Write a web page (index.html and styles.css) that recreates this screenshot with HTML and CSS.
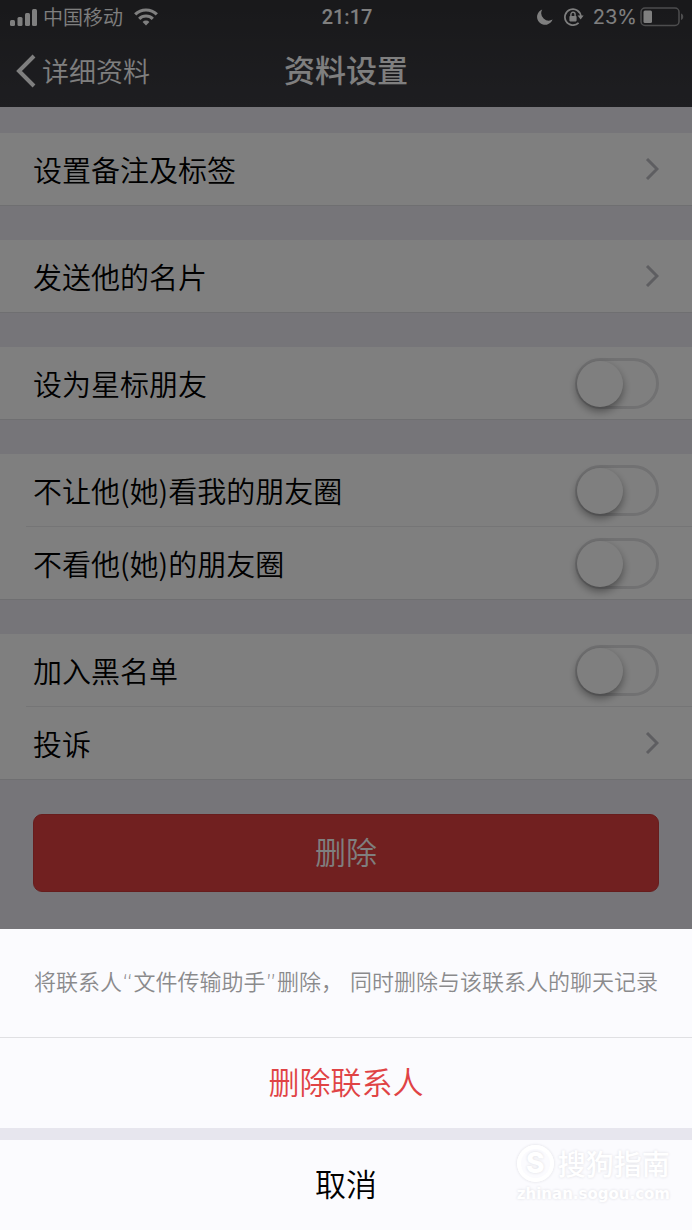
FILE: index.html
```html
<!DOCTYPE html>
<html lang="zh-CN">
<head>
  <meta charset="UTF-8">
  <meta name="viewport" content="width=device-width, initial-scale=1">
  <title>资料设置</title>
  <link rel="stylesheet" href="styles.css">
</head>
<body>
  <header class="header">
    <div class="status-bar">
      <div class="status-left">
        <svg class="signal" width="27" height="17" viewBox="0 0 27 17" fill="currentColor">
          <rect x="0" y="11" width="5" height="6" rx="1.5"/>
          <rect x="7.5" y="8" width="5" height="9" rx="1.5"/>
          <rect x="15" y="4" width="5" height="13" rx="1.5"/>
          <rect x="22" y="0" width="5" height="17" rx="1.5"/>
        </svg>
        <span class="carrier">中国移动</span>
        <svg class="wifi" width="24" height="18" viewBox="0 0 24 18" fill="none" stroke="currentColor" stroke-width="3.2">
          <path d="M1.2 6.4a15.4 15.4 0 0 1 21.6 0"/>
          <path d="M5.2 10.8a9.7 9.7 0 0 1 13.6 0"/>
          <path d="M12 17.5l-3.4-3.6a4.8 4.8 0 0 1 6.8 0z" fill="currentColor" stroke="none"/>
        </svg>
      </div>
      <span class="time">21:17</span>
      <div class="status-right">
        <svg class="moon" width="16" height="16" viewBox="0 0 16 16" fill="currentColor">
          <path d="M5.2 0.4A8 8 0 1 0 15.6 10.6A7.6 7.6 0 0 1 5.2 0.4z"/>
        </svg>
        <svg class="lock" width="20" height="18" viewBox="0 0 20 18" fill="none" stroke="currentColor">
          <path d="M14.6 14.8A8 8 0 1 1 16.9 8.5" stroke-width="1.7"/>
          <path d="M13.6 7.5h6l-3 4z" fill="currentColor" stroke="none"/>
          <rect x="5.4" y="8" width="7.2" height="5.4" rx="0.8" fill="currentColor" stroke="none"/>
          <path d="M6.9 8V6.4a2.1 2.1 0 0 1 4.2 0V8" stroke-width="1.4"/>
        </svg>
        <span class="percent">23%</span>
        <svg class="battery" width="44" height="20" viewBox="0 0 44 20">
          <rect x="1" y="1" width="38" height="17.5" rx="4" fill="none" stroke="currentColor" stroke-width="1.5" opacity="0.5"/>
          <rect x="3.5" y="3.5" width="8.5" height="12.5" rx="1.5" fill="currentColor"/>
          <path d="M41 6.5c3 1 3 5.5 0 6.5z" fill="currentColor" opacity="0.5"/>
        </svg>
      </div>
    </div>
    <nav class="nav-bar">
      <a class="back" href="#">
        <svg width="20" height="34" viewBox="0 0 20 34" fill="none" stroke="currentColor" stroke-width="4">
          <path d="M18 2L3 17l15 15"/>
        </svg>
        详细资料
      </a>
      <h1>资料设置</h1>
    </nav>
  </header>

  <main>
    <section class="group">
      <a class="row" href="#">设置备注及标签
        <svg class="arrow" width="14" height="22" viewBox="0 0 14 22"><path d="M2 1l10 10L2 21"/></svg>
      </a>
    </section>

    <section class="group">
      <a class="row" href="#">发送他的名片
        <svg class="arrow" width="14" height="22" viewBox="0 0 14 22"><path d="M2 1l10 10L2 21"/></svg>
      </a>
    </section>

    <section class="group">
      <label class="row">设为星标朋友 <input type="checkbox" class="switch"></label>
    </section>

    <section class="group">
      <label class="row">不让他(她)看我的朋友圈 <input type="checkbox" class="switch"></label>
      <label class="row">不看他(她)的朋友圈 <input type="checkbox" class="switch"></label>
    </section>

    <section class="group">
      <label class="row">加入黑名单 <input type="checkbox" class="switch"></label>
      <a class="row" href="#">投诉
        <svg class="arrow" width="14" height="22" viewBox="0 0 14 22"><path d="M2 1l10 10L2 21"/></svg>
      </a>
    </section>

    <button class="delete-btn">删除</button>
  </main>

  <div class="backdrop"></div>

  <div class="sheet" role="dialog" aria-label="删除联系人">
    <p class="message">将联系人“文件传输助手”删除， 同时删除与该联系人的聊天记录</p>
    <button class="sheet-btn danger">删除联系人</button>
    <button class="sheet-btn cancel">取消</button>
    <div class="watermark">
      <div class="brand"><span class="brand-logo">S</span>搜狗指南</div>
      <div class="site">zhinan.sogou.com</div>
    </div>
  </div>
</body>
</html>
```
FILE: styles.css
```css
* {
  box-sizing: border-box;
}

body {
  margin: 0;
  min-height: 100vh;
  background-color: #ecebf2;
  color: #000;
  font-family: "Noto Sans CJK SC", sans-serif;
  font-weight: 350;
}

a {
  color: inherit;
  text-decoration: none;
}

button {
  border: none;
  font-family: inherit;
  font-weight: inherit;
  cursor: pointer;
}

svg {
  flex: none;
}

/* header */
.header {
  background: linear-gradient(#323236, #3c3c42);
  color: #fff;
}

.status-bar {
  display: grid;
  grid-template-columns: 1fr auto 1fr;
  align-items: center;
  height: 34px;
  padding: 0 8px 0 10px;
  font-size: 20px;
  line-height: 34px;
}

.status-left,
.status-right {
  display: flex;
  align-items: center;
}

.status-right {
  justify-content: flex-end;
}

.carrier {
  margin: 0 11px 0 6px;
}

.time {
  font-family: Roboto, sans-serif;
  font-weight: 500;
}

.moon {
  margin-right: 11px;
}

.percent {
  margin: 0 3px 0 9px;
  font-family: Inter, sans-serif;
  font-weight: 400;
}

.nav-bar {
  display: grid;
  grid-template-columns: 1fr auto 1fr;
  align-items: center;
  height: 73px;
  padding: 0 16px;
}

.back {
  display: flex;
  align-items: center;
  gap: 6px;
  font-size: 27px;
}

h1 {
  margin: 0;
  padding-bottom: 4px;
  font-size: 31px;
  font-weight: 500;
}

/* settings list */
main {
  padding: 26px 0 338px;
}

.group {
  margin-bottom: 34px;
  background-color: #fff;
  border-bottom: 1px solid #dedee2;
}

.row {
  display: flex;
  align-items: center;
  justify-content: space-between;
  height: 72px;
  padding: 0 33px;
  font-size: 29px;
}

.row + .row {
  height: 73px;
  border-top: 1px solid #ebebed;
  margin-left: 26px;
  padding-left: 7px;
}

.arrow {
  fill: none;
  stroke: #bcbcc2;
  stroke-width: 3;
}

.switch {
  appearance: none;
  width: 84px;
  height: 51px;
  margin: 0;
  border: 3px solid #e2e2e4;
  border-radius: 26px;
  background-color: #fff;
}

.switch::before {
  content: "";
  display: block;
  width: 46px;
  height: 46px;
  margin-left: -1px;
  border-radius: 50%;
  background-color: #fff;
  box-shadow: 0 4px 8px rgba(0, 0, 0, 0.4);
}

.switch:checked {
  background-color: #4cd964;
}

.switch:checked::before {
  margin-left: auto;
}

.delete-btn {
  display: block;
  width: calc(100% - 66px);
  height: 78px;
  margin: 0 33px;
  padding-bottom: 6px;
  border: 1px solid #cf3a3a;
  border-radius: 9px;
  background-color: #e24040;
  color: #fff;
  font-size: 31px;
}

/* action sheet */
.backdrop {
  position: fixed;
  inset: 0;
  background-color: rgba(0, 0, 0, 0.5);
}

.sheet {
  position: fixed;
  left: 0;
  right: 0;
  bottom: 0;
  background-color: #e7e6ee;
}

.message {
  margin: 0;
  padding: 37px 24px;
  border-bottom: 1px solid #e0e0e3;
  background-color: #fbfbfe;
  color: #8a8a8c;
  font-family: "DejaVu Sans", "Noto Sans CJK SC", sans-serif;
  font-size: 22px;
  line-height: 34px;
  text-align: center;
}

.sheet-btn {
  display: block;
  width: 100%;
  height: 90px;
  padding-bottom: 6px;
  background-color: #fbfbfe;
  font-size: 31px;
}

.danger {
  margin-bottom: 12px;
  color: #e04345;
}

.cancel {
  color: #000;
}

.watermark {
  position: absolute;
  right: 22px;
  bottom: 24px;
  color: #fff;
  text-shadow: 0 0 3px #dcdce2;
  pointer-events: none;
}

.brand {
  display: flex;
  align-items: center;
  gap: 4px;
  font-size: 28px;
  font-weight: 500;
  line-height: 38px;
}

.brand-logo {
  width: 37px;
  height: 37px;
  border: 4px solid #fff;
  border-radius: 50%;
  box-shadow: 0 0 3px #dcdce2;
  font-family: Inter, sans-serif;
  font-weight: 800;
  line-height: 29px;
  text-align: center;
}

.site {
  font-family: "DejaVu Sans", sans-serif;
  font-size: 15px;
  font-weight: bold;
  line-height: 24px;
}
```
